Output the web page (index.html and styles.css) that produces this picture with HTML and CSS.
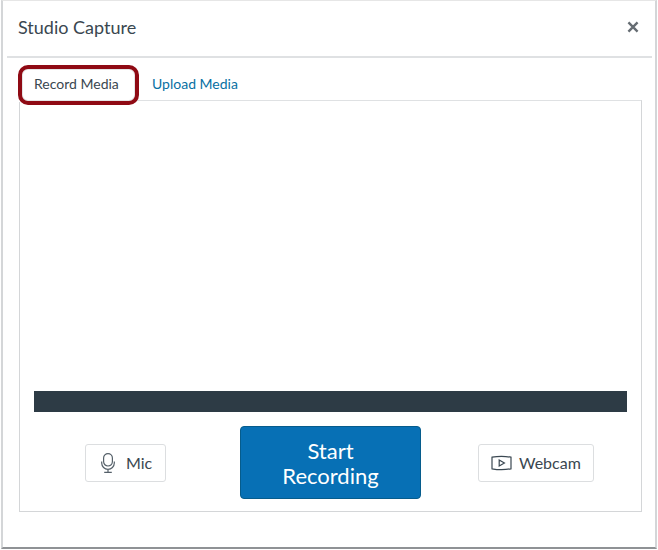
FILE: index.html
```html
<!DOCTYPE html>
<html lang="en">
<head>
<meta charset="utf-8">
<title>Studio Capture</title>
<link rel="stylesheet" href="styles.css">
</head>
<body>
<div class="dialog">
  <header class="header">
    <h1 class="title">Studio Capture</h1>
    <svg class="close" viewBox="0 0 10 10" aria-label="Close"><path d="M1.200 1.200 8.800 8.800M8.800 1.200 1.200 8.800"/></svg>
  </header>
  <div class="rule"></div>
  <div class="content">
    <nav class="tabs">
      <div class="tab tab-active">Record Media</div>
      <div class="tab tab-link">Upload Media</div>
      <span class="highlight"></span>
    </nav>
    <section class="panel">
      <div class="preview"></div>
      <div class="meter"></div>
      <div class="controls">
        <button class="btn btn-mic">
          <svg class="icon-mic" viewBox="0 0 14 20"><rect x="2.600" y=".6" width="8.800" height="12.400" rx="4.400"/><path d="M.7 8.500v1.500a6.300 6.300 0 0 0 12.600 0V8.500M7 16.300v3M3.200 19.300h7.600"/></svg>
          Mic
        </button>
        <button class="btn-start">Start<br>Recording</button>
        <button class="btn btn-cam">
          <svg class="icon-cam" viewBox="0 0 21 16"><path d="M1 2.200Q10.500 .4 20 2.200V13.800Q10.500 15.600 1 13.800Z"/><path d="M8.200 5V11L13.400 8Z"/></svg>
          Webcam
        </button>
      </div>
    </section>
  </div>
</div>
</body>
</html>
```
FILE: styles.css
```css
* { box-sizing: border-box; }
html, body { margin: 0; padding: 0; background: #fff; }
body { width: 658px; height: 550px; font-family: Lato, "Open Sans", sans-serif; color: #2d3b45; }
.dialog {
  width: 656px; height: 549px; margin-left: 1px;
  background: #fff;
  border: 1px solid #d4d6d8; border-left-width: 2px; border-right-width: 2px; border-top-color: #e6e6e6;
  border-bottom: 2px solid #8f9295;
  display: flex; flex-direction: column;
}
.header { height: 55px; display: flex; align-items: center; justify-content: space-between; padding: 0 16px 3px 15px; flex: none; }
.title { margin: 0; font-size: 18px; font-weight: 400; line-height: 24px; color: #3a4750; }
.close { width: 12px; height: 12px; fill: none; stroke: #666d73; stroke-width: 2; }
.rule { height: 2px; margin: 0 3px 0 4px; background: #dfe1e3; flex: none; }
.content { padding: 7px 13px 0 16px; flex: 1; display: flex; flex-direction: column; }
.tabs { display: flex; height: 35px; flex: none; position: relative; }
.tab { font-size: 14px; line-height: 20px; padding: 9px 15px 0; position: relative; }
.tab-active { width: 117px; height: 37px; background: #fff; z-index: 1; color: #3a4750; }
.tab-link { color: #0770a3; padding-left: 16px; }
.highlight {
  position: absolute; left: -1px; top: 0; width: 121px; height: 40px; z-index: 2;
  border: 4px solid #8f0a14; border-radius: 10px;
  box-shadow: inset 0 0 0 1px #e4e5e6;
}
.panel { flex: none; height: 412px; border: 1px solid #d4d6d8; border-top-color: #dfe1e3; display: flex; flex-direction: column; padding: 0 14px; }
.preview { height: 290px; flex: none; }
.meter { height: 21px; background: #2d3b45; flex: none; }
.controls { flex: none; display: flex; align-items: center; height: 73px; margin-top: 14px; }
.btn {
  display: flex; align-items: center; height: 38px; background: #fff;
  border: 1px solid #dcdee0; border-radius: 3px; font: 16px Lato, sans-serif; color: #3a4750; padding: 0;
}
.btn-mic { width: 81px; margin-left: 51px; padding-left: 15px; gap: 11px; }
.btn-cam { width: 116px; margin-left: 57px; padding-left: 12px; gap: 7px; }
.icon-mic { width: 14px; height: 20px; fill: none; stroke: #556069; stroke-width: 1.200; }
.icon-cam { width: 21px; height: 16px; fill: none; stroke: #3b4852; stroke-width: 1.200; }
.btn-start {
  width: 181px; height: 73px; margin-left: 74px; padding: 0;
  background: #0770b5; border: 1px solid #065c8c; border-radius: 4px;
  color: #fff; font: 22px/25px Lato, sans-serif;
}
```
